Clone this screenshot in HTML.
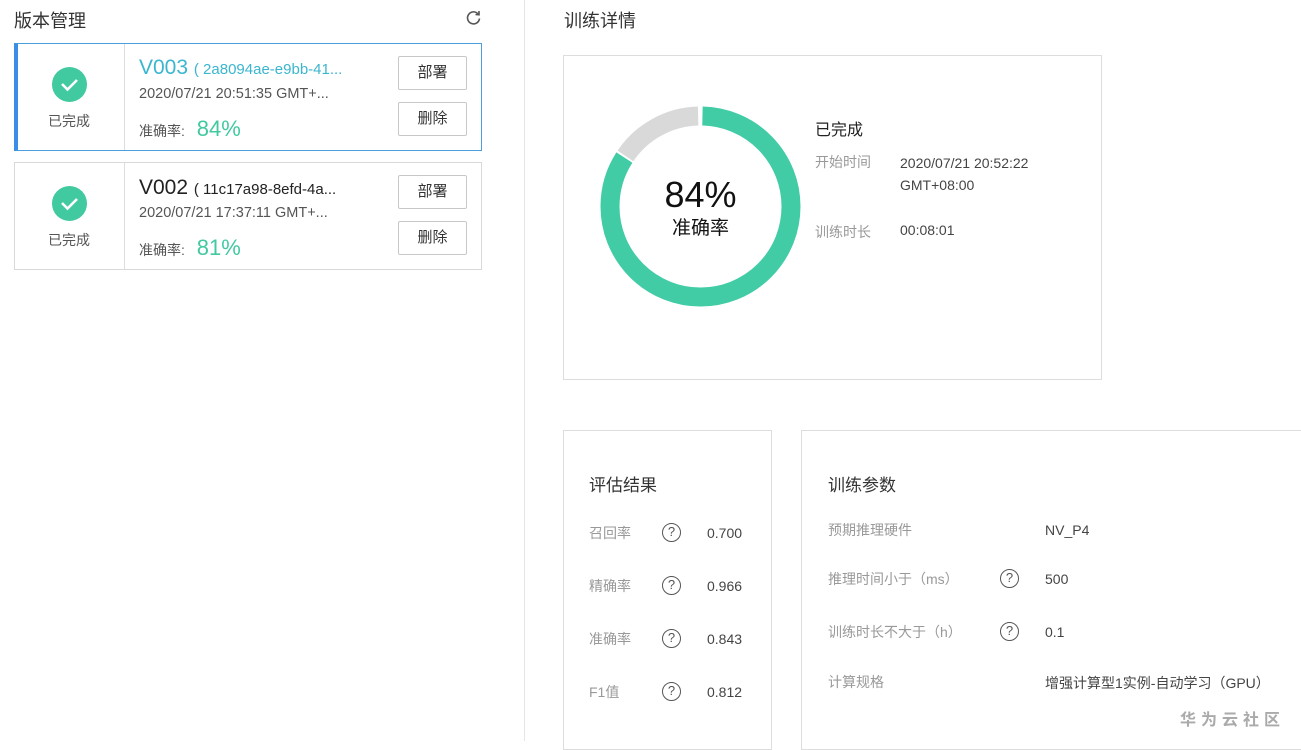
<!DOCTYPE html>
<html><head><meta charset="utf-8"><style>
*{margin:0;padding:0;box-sizing:border-box}
body{width:1301px;height:741px;background:#fff;font-family:"Liberation Sans","Noto Sans CJK SC",sans-serif;color:#333;position:relative;overflow:hidden}
.a{position:absolute;white-space:nowrap}
.card{position:absolute;left:14px;width:468px;height:108px;border:1px solid #d9d9d9;background:#fff}
.card.sel{border-color:#4a9fe0;border-left:4px solid #3a8ee6}
.card .lc{position:absolute;left:0;top:0;width:110px;height:100%;border-right:1px solid #ddd}
.chk{position:absolute;left:37px;top:23px;width:35px;height:35px;border-radius:50%;background:#41c9a0}
.btn{position:absolute;left:383px;width:69px;height:34px;border:1px solid #c8c8c8;border-radius:2px;font-size:15px;text-align:center;line-height:32px;color:#333}
.gray{color:#999}
.q{position:absolute;width:19px;height:19px;border:1.6px solid #555;border-radius:50%;font-size:13px;text-align:center;line-height:16px;color:#555}
.v{font-size:14px;color:#444}
</style></head><body>
<div class="a" style="left:14px;top:7px;font-size:18px;color:#333">版本管理</div>
<svg class="a" style="left:465px;top:9px" width="17" height="17" viewBox="0 0 17 17"><path d="M13.5 5.5 A6 6 0 1 0 14.5 9.5" fill="none" stroke="#555" stroke-width="1.6"/><path d="M10.5 5.5 L14 5.8 L14 2" fill="none" stroke="#555" stroke-width="1.6"/></svg>

<div class="card sel" style="top:43px">
 <div class="lc" style="width:107px"><div class="chk" style="left:34px"><svg width="35" height="35"><path d="M10 17 L15.5 22.5 L25 13" fill="none" stroke="#fff" stroke-width="2.6"/></svg></div><div class="a" style="left:30px;top:67px;font-size:14px;color:#555">已完成</div></div>
 <div class="a" style="left:121px;top:12px;font-size:21px;color:#3ab6cf">V003 <span style="font-size:15px">( 2a8094ae-e9bb-41...</span></div>
 <div class="a" style="left:121px;top:42px;font-size:14.5px;color:#555">2020/07/21 20:51:35 GMT+...</div>
 <div class="a" style="left:121px;top:72px;font-size:14px;color:#555">准确率: <span style="font-size:22px;color:#41c9a0;margin-left:8px">84%</span></div>
 <div class="btn" style="top:12px;left:380px">部署</div><div class="btn" style="top:58px;left:380px">删除</div>
</div>
<div class="card" style="top:162px">
 <div class="lc"><div class="chk"><svg width="35" height="35"><path d="M10 17 L15.5 22.5 L25 13" fill="none" stroke="#fff" stroke-width="2.6"/></svg></div><div class="a" style="left:33px;top:67px;font-size:14px;color:#555">已完成</div></div>
 <div class="a" style="left:124px;top:13px;font-size:21px;color:#222">V002 <span style="font-size:15px">( 11c17a98-8efd-4a...</span></div>
 <div class="a" style="left:124px;top:42px;font-size:14.5px;color:#555">2020/07/21 17:37:11 GMT+...</div>
 <div class="a" style="left:124px;top:72px;font-size:14px;color:#555">准确率: <span style="font-size:22px;color:#41c9a0;margin-left:8px">81%</span></div>
 <div class="btn" style="top:12px">部署</div><div class="btn" style="top:58px">删除</div>
</div>

<div class="a" style="left:524px;top:0;width:1px;height:741px;background:#e6e6e6"></div>
<div class="a" style="left:564px;top:7px;font-size:18px;color:#333">训练详情</div>
<div class="a" style="left:563px;top:55px;width:539px;height:325px;border:1px solid #ddd"></div>
<svg class="a" style="left:600px;top:106px" width="201" height="201" viewBox="0 0 201 201">
 <g transform="rotate(-90 100.5 100.5)">
 <circle cx="100.5" cy="100.5" r="90.5" fill="none" stroke="#41cca6" stroke-width="19" stroke-dasharray="476 600" stroke-dashoffset="-2"/>
 <circle cx="100.5" cy="100.5" r="90.5" fill="none" stroke="#d9d9d9" stroke-width="19" stroke-dasharray="86 600" stroke-dashoffset="-480"/>
 </g>
</svg>
<div class="a" style="left:600px;top:174px;width:201px;text-align:center;font-size:36px;color:#111">84%</div>
<div class="a" style="left:600px;top:213px;width:201px;text-align:center;font-size:19px;color:#111">准确率</div>
<div class="a" style="left:815px;top:116px;font-size:16px;color:#222">已完成</div>
<div class="a gray" style="left:815px;top:152px;font-size:14px">开始时间</div>
<div class="a v" style="left:900px;top:152px;line-height:22px">2020/07/21 20:52:22<br>GMT+08:00</div>
<div class="a gray" style="left:815px;top:222px;font-size:14px">训练时长</div>
<div class="a v" style="left:900px;top:222px">00:08:01</div>

<div class="a" style="left:563px;top:430px;width:209px;height:320px;border:1px solid #ddd"></div>
<div class="a" style="left:589px;top:471px;font-size:17px;color:#333">评估结果</div>
<div class="a gray" style="left:589px;top:523px;font-size:14px">召回率</div><div class="q" style="left:662px;top:523px">?</div><div class="a v" style="left:707px;top:525px">0.700</div>
<div class="a gray" style="left:589px;top:576px;font-size:14px">精确率</div><div class="q" style="left:662px;top:576px">?</div><div class="a v" style="left:707px;top:578px">0.966</div>
<div class="a gray" style="left:589px;top:629px;font-size:14px">准确率</div><div class="q" style="left:662px;top:629px">?</div><div class="a v" style="left:707px;top:631px">0.843</div>
<div class="a gray" style="left:589px;top:682px;font-size:14px">F1值</div><div class="q" style="left:662px;top:682px">?</div><div class="a v" style="left:707px;top:684px">0.812</div>

<div class="a" style="left:801px;top:430px;width:520px;height:320px;border:1px solid #ddd"></div>
<div class="a" style="left:828px;top:471px;font-size:17px;color:#333">训练参数</div>
<div class="a gray" style="left:828px;top:520px;font-size:14px">预期推理硬件</div><div class="a v" style="left:1045px;top:522px">NV_P4</div>
<div class="a gray" style="left:828px;top:569px;font-size:14px">推理时间小于（ms）</div><div class="q" style="left:1000px;top:569px">?</div><div class="a v" style="left:1045px;top:571px">500</div>
<div class="a gray" style="left:828px;top:622px;font-size:14px">训练时长不大于（h）</div><div class="q" style="left:1000px;top:622px">?</div><div class="a v" style="left:1045px;top:624px">0.1</div>
<div class="a gray" style="left:828px;top:672px;font-size:14px">计算规格</div><div class="a v" style="left:1045px;top:673px">增强计算型1实例-自动学习（GPU）</div>
<div class="a" style="left:1180px;top:706px;font-size:16px;color:#aaa;letter-spacing:5px;font-weight:bold">华为云社区</div>
</body></html>
